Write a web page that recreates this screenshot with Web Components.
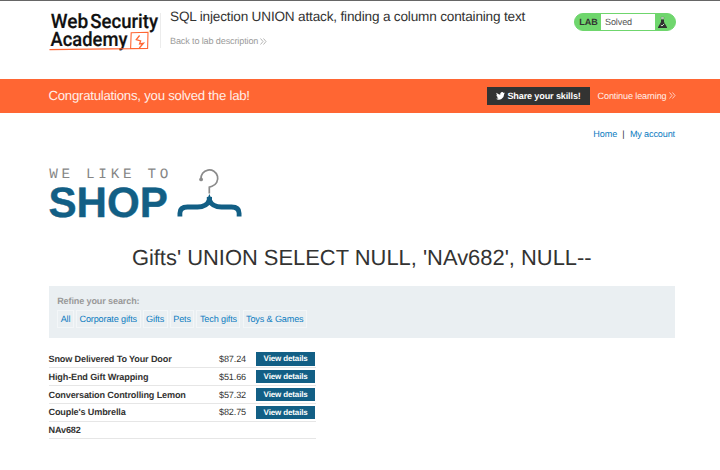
<!DOCTYPE html>
<html lang="en">
<head>
<meta charset="utf-8">
<title>SQL injection UNION attack, finding a column containing text</title>
<style>
body{margin:0;background:#fff;color:#333332;font-family:"Liberation Sans",Arial,sans-serif;font-size:9.1px;letter-spacing:-.14px;line-height:10px;text-rendering:geometricPrecision}
</style>
</head>
<body>
<lab-page></lab-page>

<template id="t-page">
<style>
:host{display:block;height:470px;overflow:hidden}
main{padding:0 45px 0 48.5px}
</style>
<lab-header></lab-header>
<lab-banner>Congratulations, you solved the lab!</lab-banner>
<main>
<shop-nav></shop-nav>
<shop-logo></shop-logo>
<shop-title>Gifts' UNION SELECT NULL, 'NAv682', NULL--</shop-title>
<search-filters></search-filters>
<product-list></product-list>
</main>
</template>

<template id="t-header">
<style>
:host{display:flex;box-sizing:border-box;height:79px;border-top:1px solid #666;padding:0 44.5px 0 48px}
academy-logo{margin-top:10px}
.info{flex:1;margin-top:12px;height:35px;border-left:1px solid #ececec;padding-left:9px}
h2{margin:-4.500px 0 0;font-size:13.6px;letter-spacing:-.18px;line-height:16px;font-weight:400}
a{display:flex;align-items:center;gap:2px;margin-top:11.500px;color:#9c9c9b}
lab-status{margin-top:12px}
</style>
<academy-logo></academy-logo>
<div class="info"><h2>SQL injection UNION attack, finding a column containing text</h2>
<a>Back to lab description <double-chevron></double-chevron></a></div>
<lab-status>Solved</lab-status>
</template>

<template id="t-academy">
<style>:host{display:block;width:112px;height:44px}svg{display:block;overflow:visible}text{font-family:Roboto,"Liberation Sans",sans-serif;font-weight:500;font-size:19.8px;letter-spacing:0;fill:#111;stroke:#111;stroke-width:.2}</style>
<svg width="112" height="44" viewBox="48 11 112 44">
<text x="50.700" y="28.2" textLength="37.500" lengthAdjust="spacingAndGlyphs">Web</text>
<text x="90.300" y="28.2" textLength="67.700" lengthAdjust="spacingAndGlyphs">Security</text>
<text x="50.600" y="46.300" textLength="76.800" lengthAdjust="spacingAndGlyphs">Academy</text>
<path d="M49.500 49.600L130.600 48.600L131.200 32.800L148 32.300L147.600 48.400L130.600 48.600" fill="none" stroke="#ff6633" stroke-width="1.100"/>
<path d="M139.600 35.500L136.300 39.600L140.600 40.900L139.600 44L143.400 43.300L139.300 48" fill="none" stroke="#ff6633" stroke-width="1.300"/>
</svg>
</template>

<template id="t-status">
<style>
:host{display:flex;box-sizing:border-box;width:101.5px;height:18px;border-radius:9px;border:1px solid #6fd66d;background:#6fd66d;overflow:hidden;align-items:stretch;line-height:17px}
b{width:26px;text-align:center;box-sizing:border-box;padding-left:1px}
span{flex:1;background:#fff;padding-left:4px;color:#555}
i{width:20px;display:flex;align-items:center;padding-left:2px;box-sizing:border-box}
</style>
<b>LAB</b><span><slot></slot></span>
<i><svg width="11" height="13" viewBox="0 0 11 13"><path d="M4 3.500h3v2.500l3 5.200q.2.900-.6.900H1.600q-.8 0-.6-.9l3-5.200z" fill="#303030"/><path d="M4 1.200h3v1.600H4z" fill="#e4f7e3" stroke="#666" stroke-width=".4"/><path d="M3.800 9l1.200 1 2.200-2.200" stroke="#d6f3d5" stroke-width=".9" fill="none"/></svg></i>
</template>

<template id="t-chevron">
<style>:host{display:inline-flex}</style>
<svg width="7" height="7" viewBox="0 0 7 7"><path d="M.5.5l2.500 3-2.500 3M3.500.5l2.500 3-2.500 3" fill="none" stroke="currentColor" stroke-width=".75"/></svg>
</template>

<template id="t-banner">
<style>
:host{display:flex;align-items:center;box-sizing:border-box;height:33.7px;padding:0 44.500px 0 48.4px;background:#ff6633;color:#ffeee8}
p{flex:1;margin:0;font-size:13.2px;letter-spacing:-.23px;line-height:16px}
.share{display:flex;align-items:center;box-sizing:border-box;width:102.500px;height:18px;padding-left:8.5px;gap:2.5px;background:#333332;color:#fff;font-weight:700}
.next{display:flex;align-items:center;gap:2px;margin-left:7.700px}
</style>
<p><slot></slot></p>
<div class="share"><svg width="9" height="8" viewBox="0 0 24 20"><path fill="#fff" d="M24 2.4c-.9.4-1.8.7-2.8.8 1-.6 1.8-1.600 2.200-2.700-1 .6-2 1-3.100 1.200A4.900 4.900 0 0 0 11.700 6.200C7.700 6 4.100 4 1.700 1.100.4 3.300 1 6.200 3.200 7.700c-.8 0-1.600-.2-2.200-.6 0 2.300 1.600 4.400 3.900 4.900-.7.200-1.500.2-2.200.1.600 2 2.400 3.400 4.600 3.400A9.900 9.900 0 0 1 0 17.500 14 14 0 0 0 21.500 5c1-.7 1.800-1.600 2.500-2.600z"/></svg>Share your skills!</div>
<a class="next">Continue learning <double-chevron></double-chevron></a>
</template>

<template id="t-nav">
<style>:host{display:flex;justify-content:flex-end;gap:5.300px;padding-top:16.600px;height:39px}a{color:#0d7cc1}</style>
<a>Home</a><span>|</span><a>My account</a>
</template>

<template id="t-shop">
<style>:host{display:block;height:50px}svg{display:block;overflow:visible}
text{letter-spacing:0}
.w{font-family:"Liberation Mono","Courier New",monospace;font-size:14.3px;fill:#858585}
.s{font-weight:700;font-size:42.500px;fill:#125f85;stroke:#125f85;stroke-width:.4}</style>
<svg width="195" height="50" viewBox="48.500 168.300 195 50">
<text class="w" x="48.800" y="178.300" textLength="119" lengthAdjust="spacing">WE LIKE TO</text>
<text class="s" x="48" y="217" textLength="119.500" lengthAdjust="spacingAndGlyphs">SHOP</text>
<circle cx="200.600" cy="179.700" r="1.900" fill="#8b8b8b"/>
<path d="M200.500 179.500A8.400 8.400 0 1 1 211.500 186.600L208.800 187.500V193.700" fill="none" stroke="#8b8b8b" stroke-width="1.700"/>
<path d="M179.400 216.800V213.500Q179.400 207.300 187 207.300H197Q206 207.300 208.900 200.500Q211.800 207.300 221 207.300H231Q238.600 207.300 238.600 213.500V216.800" fill="none" stroke="#125f85" stroke-width="4.800"/>
<path d="M206.300 197.200h5.200v5h-5.200z" fill="#125f85"/>
</svg>
</template>

<template id="t-title">
<style>:host{display:block;padding-top:26.300px;text-align:center;font-size:21.92px;letter-spacing:0;line-height:26px}</style><slot></slot>
</template>

<template id="t-filters">
<style>
:host{display:block;box-sizing:border-box;height:52.300px;margin-top:15.100px;padding:10.700px 8.700px;background:#eaeff2;color:#999}
b{display:block}
div{display:flex;gap:2.100px;margin-top:3.200px}
a{box-sizing:border-box;height:18px;line-height:16px;padding:0 2.500px;border:1px solid #f3f6f8;color:#0d7cc1;white-space:nowrap}
</style>
<b>Refine your search:</b>
<div><a>All</a><a>Corporate gifts</a><a>Gifts</a><a>Pets</a><a>Tech gifts</a><a>Toys &amp; Games</a></div>
</template>

<template id="t-list">
<style>:host{display:block;width:267px;padding-top:12.600px}</style>
<product-row price="$87.24">Snow Delivered To Your Door</product-row>
<product-row price="$51.66">High-End Gift Wrapping</product-row>
<product-row price="$57.32">Conversation Controlling Lemon</product-row>
<product-row price="$82.75">Couple's Umbrella</product-row>
<product-row>NAv682</product-row>
</template>

<template id="t-row">
<style>
:host{display:grid;grid-template-columns:170.500px 36.800px 59.700px;align-items:center;box-sizing:border-box;height:17.800px;border-bottom:1px solid #e6e6e6}
:host(:not([price])){height:17px}
:host(:not([price])) .go,:host(:not([price])) .price{display:none}
.go{height:13.300px;line-height:13.300px;background:#125f85;color:#fff;font-weight:700;font-size:8px;letter-spacing:-.13px;text-align:center}
</style>
<b><slot></slot></b><span class="price"></span><a class="go">View details</a>
</template>

<script>
class Base extends HTMLElement {
  connectedCallback() {
    if (this.shadowRoot) return;
    const root = this.attachShadow({ mode: 'open' });
    root.append(document.getElementById(this.constructor.template).content.cloneNode(true));
    this.ready(root);
  }
  ready() {}
}
const simple = (name, template) => customElements.define(name, class extends Base { static template = template; });
simple('double-chevron', 't-chevron');
simple('academy-logo', 't-academy');
simple('lab-status', 't-status');
simple('lab-header', 't-header');
simple('lab-banner', 't-banner');
simple('shop-nav', 't-nav');
simple('shop-logo', 't-shop');
simple('shop-title', 't-title');
simple('search-filters', 't-filters');
customElements.define('product-row', class extends Base {
  static template = 't-row';
  ready(root) { root.querySelector('.price').textContent = this.getAttribute('price') || ''; }
});
simple('product-list', 't-list');
simple('lab-page', 't-page');
</script>
</body>
</html>
